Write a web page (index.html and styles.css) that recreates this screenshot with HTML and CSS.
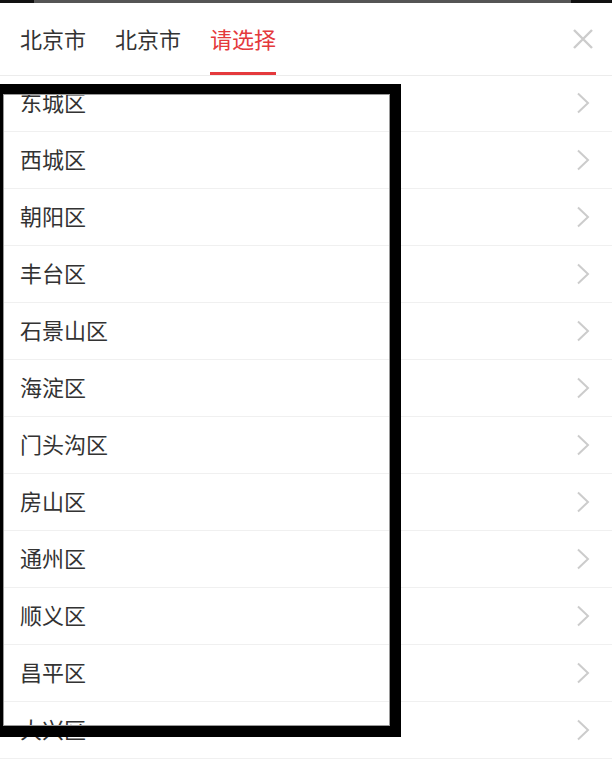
FILE: index.html
```html
<!DOCTYPE html>
<html lang="zh-CN">
<head>
<meta charset="utf-8">
<title>选择地区</title>
<link rel="stylesheet" href="styles.css">
</head>
<body>
<div class="page">
  <div class="status-bar"><span class="sb-left"></span><span class="sb-mid"></span><span class="sb-right"></span></div>
  <div class="header">
    <div class="tabs">
      <span class="tab">北京市</span>
      <span class="tab">北京市</span>
      <span class="tab active">请选择</span>
    </div>
    <svg class="close" width="22" height="22" viewBox="0 0 22 22"><path d="M2 2 L20 20 M20 2 L2 20" stroke="#cccccc" stroke-width="2.4" fill="none"/></svg>
  </div>
  <ul class="list">
    <li class="row"><span class="name">东城区</span><svg class="chev" width="14" height="22" viewBox="0 0 14 22"><path d="M2 1.5 L12 11 L2 20.5" stroke="#cccccc" stroke-width="2" fill="none"/></svg></li>
    <li class="row"><span class="name">西城区</span><svg class="chev" width="14" height="22" viewBox="0 0 14 22"><path d="M2 1.5 L12 11 L2 20.5" stroke="#cccccc" stroke-width="2" fill="none"/></svg></li>
    <li class="row"><span class="name">朝阳区</span><svg class="chev" width="14" height="22" viewBox="0 0 14 22"><path d="M2 1.5 L12 11 L2 20.5" stroke="#cccccc" stroke-width="2" fill="none"/></svg></li>
    <li class="row"><span class="name">丰台区</span><svg class="chev" width="14" height="22" viewBox="0 0 14 22"><path d="M2 1.5 L12 11 L2 20.5" stroke="#cccccc" stroke-width="2" fill="none"/></svg></li>
    <li class="row"><span class="name">石景山区</span><svg class="chev" width="14" height="22" viewBox="0 0 14 22"><path d="M2 1.5 L12 11 L2 20.5" stroke="#cccccc" stroke-width="2" fill="none"/></svg></li>
    <li class="row"><span class="name">海淀区</span><svg class="chev" width="14" height="22" viewBox="0 0 14 22"><path d="M2 1.5 L12 11 L2 20.5" stroke="#cccccc" stroke-width="2" fill="none"/></svg></li>
    <li class="row"><span class="name">门头沟区</span><svg class="chev" width="14" height="22" viewBox="0 0 14 22"><path d="M2 1.5 L12 11 L2 20.5" stroke="#cccccc" stroke-width="2" fill="none"/></svg></li>
    <li class="row"><span class="name">房山区</span><svg class="chev" width="14" height="22" viewBox="0 0 14 22"><path d="M2 1.5 L12 11 L2 20.5" stroke="#cccccc" stroke-width="2" fill="none"/></svg></li>
    <li class="row"><span class="name">通州区</span><svg class="chev" width="14" height="22" viewBox="0 0 14 22"><path d="M2 1.5 L12 11 L2 20.5" stroke="#cccccc" stroke-width="2" fill="none"/></svg></li>
    <li class="row"><span class="name">顺义区</span><svg class="chev" width="14" height="22" viewBox="0 0 14 22"><path d="M2 1.5 L12 11 L2 20.5" stroke="#cccccc" stroke-width="2" fill="none"/></svg></li>
    <li class="row"><span class="name">昌平区</span><svg class="chev" width="14" height="22" viewBox="0 0 14 22"><path d="M2 1.5 L12 11 L2 20.5" stroke="#cccccc" stroke-width="2" fill="none"/></svg></li>
    <li class="row"><span class="name">大兴区</span><svg class="chev" width="14" height="22" viewBox="0 0 14 22"><path d="M2 1.5 L12 11 L2 20.5" stroke="#cccccc" stroke-width="2" fill="none"/></svg></li>
  </ul>
  <div class="annotation"></div>
</div>
</body>
</html>
```

FILE: styles.css
```css
* { box-sizing: border-box; }
html, body {
  margin: 0;
  padding: 0;
  background: #ffffff;
}
body {
  font-family: "Noto Sans CJK SC", "Noto Sans", sans-serif;
  color: #333333;
  overflow: hidden;
}
.page {
  position: relative;
  width: 612px;
  height: 771px;
  overflow: hidden;
}
.status-bar {
  display: flex;
  height: 3px;
}
.sb-left { width: 34px; background: #111111; }
.sb-mid { flex: 1; background: #555555; }
.sb-right { width: 41px; background: #111111; }

.header {
  display: flex;
  align-items: stretch;
  justify-content: space-between;
  height: 73px;
  border-bottom: 1px solid #ececec;
  padding: 0 18px 0 20px;
}
.tabs {
  display: flex;
  gap: 29px;
  align-items: stretch;
}
.tab {
  display: flex;
  align-items: center;
  font-size: 22px;
  line-height: 1;
  color: #333333;
  padding-top: 1px;
  border-bottom: 3px solid transparent;
}
.tab.active {
  color: #e4393c;
  border-bottom-color: #e4393c;
}
.close {
  align-self: flex-start;
  margin-top: 25px;
}

.list {
  list-style: none;
  margin: -1px 0 0 0;
  padding: 0;
}
.row {
  display: flex;
  align-items: center;
  justify-content: space-between;
  height: 57px;
  border-bottom: 1px solid #f0f0f0;
  padding: 0 22px 0 20px;
  font-size: 22px;
  line-height: 1;
  color: #333333;
}
.name {
  margin-bottom: 4px;
}
.annotation {
  position: absolute;
  left: -8px;
  top: 84px;
  width: 409px;
  height: 653px;
  border: 11px solid #000000;
  border-top-width: 10px;
  box-shadow: inset 0 0 0 1px #9a9a9a;
}
```
